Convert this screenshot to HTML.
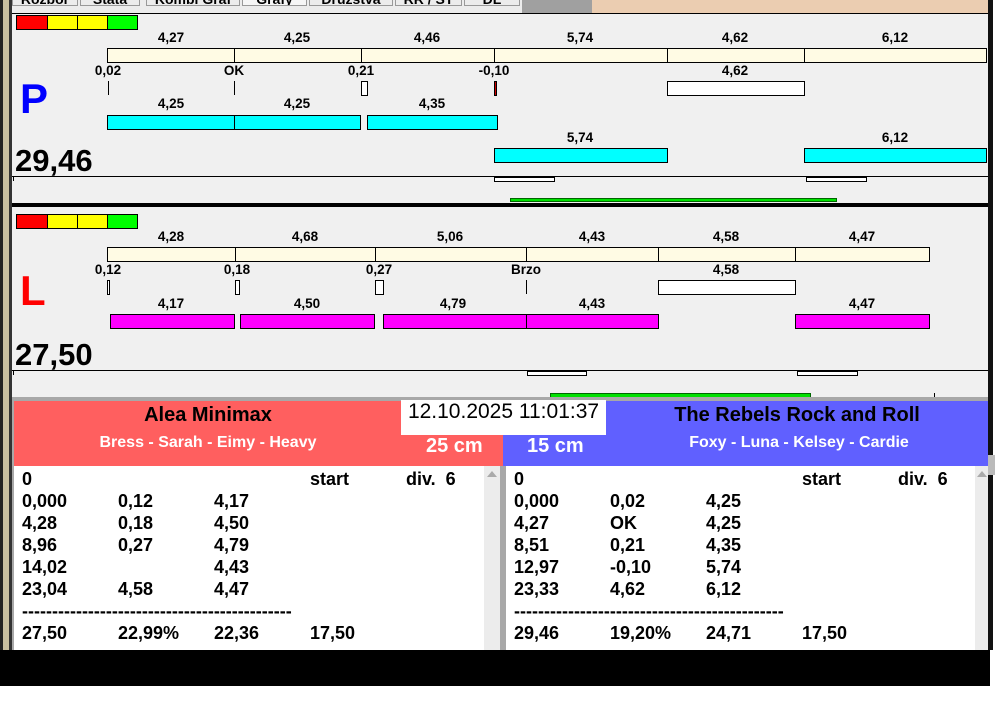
<!DOCTYPE html>
<html><head><meta charset="utf-8"><style>
*{margin:0;padding:0;box-sizing:border-box}
body{width:995px;height:716px;position:relative;background:#fff;font-family:"Liberation Sans",sans-serif;overflow:hidden}
div{position:absolute}
.t{font-weight:bold;font-size:13.5px;color:#000;transform:translateX(-50%);white-space:nowrap;line-height:14px}
.b{border:1px solid #000}
.c{background:#fffbe4}
.cy{background:#00ffff}
.mg{background:#ff00ff}
.r{font-weight:bold;font-size:18px;line-height:22px;white-space:nowrap}
.tab{top:-6px;height:12px;background:#ececec;border:1px solid #999;border-top:none;font-size:14px;font-weight:bold;line-height:10px;text-align:center;overflow:hidden;color:#000}
</style></head><body>
<div style="left:0;top:0;width:3px;height:686px;background:#222"></div>
<div style="left:3px;top:0;width:6px;height:686px;background:#c8bfa0"></div>
<div style="left:9px;top:0;width:3px;height:650px;background:#333"></div>
<div style="left:0;top:650px;width:990px;height:36px;background:#000"></div>
<div style="left:988px;top:0;width:5px;height:650px;background:#111"></div>
<div style="left:12px;top:0;width:976px;height:13px;background:#ececec"></div>
<div style="left:522px;top:0;width:70px;height:13px;background:#a0a0a0"></div>
<div style="left:592px;top:0;width:396px;height:13px;background:#ebcdb1"></div>
<div class="tab" style="left:12px;width:66px">Rozbor</div>
<div class="tab" style="left:80px;width:60px">Státa</div>
<div class="tab" style="left:146px;width:94px">Kombi Graf</div>
<div class="tab" style="left:242px;width:65px;background:#f6f6f6">Grafy</div>
<div class="tab" style="left:309px;width:84px">Družstva</div>
<div class="tab" style="left:395px;width:67px">RR / ST</div>
<div class="tab" style="left:464px;width:56px">DL</div>
<div style="left:12px;top:13px;width:976px;height:190px;background:#f0f0f0;border-top:1px solid #000"></div>
<div class="b" style="left:16px;top:15px;width:32px;height:15px;background:#f00"></div>
<div class="b" style="left:47px;top:15px;width:31px;height:15px;background:#ff0"></div>
<div class="b" style="left:77px;top:15px;width:31px;height:15px;background:#ff0"></div>
<div class="b" style="left:107px;top:15px;width:31px;height:15px;background:#0f0"></div>
<div class="t" style="left:171px;top:31px">4,27</div><div class="t" style="left:297px;top:31px">4,25</div><div class="t" style="left:427px;top:31px">4,46</div><div class="t" style="left:580px;top:31px">5,74</div><div class="t" style="left:735px;top:31px">4,62</div><div class="t" style="left:895px;top:31px">6,12</div>
<div class="b c" style="left:107px;top:48px;width:128px;height:15px"></div><div class="b c" style="left:234px;top:48px;width:128px;height:15px"></div><div class="b c" style="left:361px;top:48px;width:134px;height:15px"></div><div class="b c" style="left:494px;top:48px;width:174px;height:15px"></div><div class="b c" style="left:667px;top:48px;width:138px;height:15px"></div><div class="b c" style="left:804px;top:48px;width:183px;height:15px"></div>
<div class="t" style="left:108px;top:64px">0,02</div><div class="t" style="left:234px;top:64px">OK</div><div class="t" style="left:361px;top:64px">0,21</div><div class="t" style="left:494px;top:64px">-0,10</div><div class="t" style="left:735px;top:64px">4,62</div>
<div style="left:108px;top:81px;width:1px;height:14px;background:#000"></div>
<div style="left:234px;top:81px;width:1px;height:14px;background:#000"></div>
<div class="b" style="left:361px;top:81px;width:7px;height:15px;background:#fff"></div>
<div class="b" style="left:494px;top:81px;width:3px;height:15px;background:#c00"></div>
<div class="b" style="left:667px;top:81px;width:138px;height:15px;background:#fff"></div>
<div style="left:20px;top:76px;font-size:42px;font-weight:bold;color:#0000ff;line-height:46px">P</div>
<div class="t" style="left:171px;top:97px">4,25</div><div class="t" style="left:297px;top:97px">4,25</div><div class="t" style="left:432px;top:97px">4,35</div>
<div class="b cy" style="left:107px;top:115px;width:128px;height:15px"></div><div class="b cy" style="left:234px;top:115px;width:127px;height:15px"></div><div class="b cy" style="left:367px;top:115px;width:131px;height:15px"></div>
<div class="t" style="left:580px;top:131px">5,74</div><div class="t" style="left:895px;top:131px">6,12</div>
<div class="b cy" style="left:494px;top:148px;width:174px;height:15px"></div><div class="b cy" style="left:804px;top:148px;width:183px;height:15px"></div>
<div style="left:15px;top:144px;font-size:31px;font-weight:bold;line-height:34px">29,46</div>
<div style="left:12px;top:176px;width:976px;height:1px;background:#000"></div>
<div style="left:13px;top:176px;width:1px;height:5px;background:#000"></div>
<div class="b" style="left:494px;top:177px;width:61px;height:5px;background:#fff"></div>
<div class="b" style="left:806px;top:177px;width:61px;height:5px;background:#fff"></div>
<div style="left:510px;top:198px;width:327px;height:4px;background:#00e000;border:1px solid #060"></div>
<div style="left:12px;top:203px;width:976px;height:4px;background:#000"></div>
<div style="left:12px;top:207px;width:976px;height:190px;background:#f0f0f0"></div>
<div class="b" style="left:16px;top:214px;width:32px;height:15px;background:#f00"></div>
<div class="b" style="left:47px;top:214px;width:31px;height:15px;background:#ff0"></div>
<div class="b" style="left:77px;top:214px;width:31px;height:15px;background:#ff0"></div>
<div class="b" style="left:107px;top:214px;width:31px;height:15px;background:#0f0"></div>
<div class="t" style="left:171px;top:230px">4,28</div><div class="t" style="left:305px;top:230px">4,68</div><div class="t" style="left:450px;top:230px">5,06</div><div class="t" style="left:592px;top:230px">4,43</div><div class="t" style="left:726px;top:230px">4,58</div><div class="t" style="left:862px;top:230px">4,47</div>
<div class="b c" style="left:107px;top:247px;width:129px;height:15px"></div><div class="b c" style="left:235px;top:247px;width:141px;height:15px"></div><div class="b c" style="left:375px;top:247px;width:152px;height:15px"></div><div class="b c" style="left:526px;top:247px;width:133px;height:15px"></div><div class="b c" style="left:658px;top:247px;width:138px;height:15px"></div><div class="b c" style="left:795px;top:247px;width:135px;height:15px"></div>
<div class="t" style="left:108px;top:263px">0,12</div><div class="t" style="left:237px;top:263px">0,18</div><div class="t" style="left:379px;top:263px">0,27</div><div class="t" style="left:526px;top:263px">Brzo</div><div class="t" style="left:726px;top:263px">4,58</div>
<div class="b" style="left:107px;top:280px;width:3px;height:15px;background:#fff"></div>
<div class="b" style="left:235px;top:280px;width:5px;height:15px;background:#fff"></div>
<div class="b" style="left:375px;top:280px;width:9px;height:15px;background:#fff"></div>
<div style="left:526px;top:280px;width:1px;height:14px;background:#000"></div>
<div class="b" style="left:658px;top:280px;width:138px;height:15px;background:#fff"></div>
<div style="left:20px;top:268px;font-size:42px;font-weight:bold;color:#ff0000;line-height:46px">L</div>
<div class="t" style="left:171px;top:297px">4,17</div><div class="t" style="left:307px;top:297px">4,50</div><div class="t" style="left:453px;top:297px">4,79</div><div class="t" style="left:592px;top:297px">4,43</div><div class="t" style="left:862px;top:297px">4,47</div>
<div class="b mg" style="left:110px;top:314px;width:125px;height:15px"></div><div class="b mg" style="left:240px;top:314px;width:135px;height:15px"></div><div class="b mg" style="left:383px;top:314px;width:144px;height:15px"></div><div class="b mg" style="left:526px;top:314px;width:133px;height:15px"></div><div class="b mg" style="left:795px;top:314px;width:135px;height:15px"></div>
<div style="left:15px;top:338px;font-size:31px;font-weight:bold;line-height:34px">27,50</div>
<div style="left:12px;top:370px;width:976px;height:1px;background:#000"></div>
<div style="left:13px;top:370px;width:1px;height:5px;background:#000"></div>
<div class="b" style="left:527px;top:371px;width:60px;height:5px;background:#fff"></div>
<div class="b" style="left:797px;top:371px;width:61px;height:5px;background:#fff"></div>
<div style="left:550px;top:393px;width:261px;height:5px;background:#00e000;border:1px solid #060"></div>
<div style="left:934px;top:393px;width:1px;height:4px;background:#000"></div>
<div style="left:12px;top:397px;width:976px;height:253px;background:#a8a8a8"></div>
<div style="left:14px;top:401px;width:489px;height:65px;background:#ff5f5f"></div>
<div style="left:503px;top:401px;width:485px;height:65px;background:#6060ff"></div>
<div style="left:208px;top:404px;transform:translateX(-50%);font-size:20px;font-weight:bold;white-space:nowrap">Alea Minimax</div>
<div style="left:208px;top:434px;transform:translateX(-50%);font-size:16px;font-weight:bold;color:#fff;white-space:nowrap">Bress - Sarah - Eimy - Heavy</div>
<div style="left:797px;top:404px;transform:translateX(-50%);font-size:20px;font-weight:bold;white-space:nowrap">The Rebels Rock and Roll</div>
<div style="left:799px;top:434px;transform:translateX(-50%);font-size:16px;font-weight:bold;color:#fff;white-space:nowrap">Foxy - Luna - Kelsey - Cardie</div>
<div style="left:401px;top:400px;width:205px;height:35px;background:#fff;font-size:21px;line-height:24px;text-align:center">12.10.2025 11:01:37</div>
<div style="left:426px;top:435px;font-size:20px;font-weight:bold;color:#fff">25 cm</div>
<div style="left:527px;top:435px;font-size:20px;font-weight:bold;color:#fff">15 cm</div>
<div style="left:14px;top:466px;width:470px;height:184px;background:#fff"></div>
<div style="left:484px;top:466px;width:16px;height:184px;background:#ececec"></div>
<div style="left:487px;top:471px;width:0;height:0;border-left:5px solid transparent;border-right:5px solid transparent;border-bottom:6px solid #aaa"></div>
<div style="left:506px;top:466px;width:469px;height:184px;background:#fff"></div>
<div style="left:975px;top:466px;width:13px;height:184px;background:#ececec"></div>
<div style="left:977px;top:471px;width:0;height:0;border-left:5px solid transparent;border-right:5px solid transparent;border-bottom:6px solid #aaa"></div>
<div class="r" style="left:22px;top:468px">0<br>0,000<br>4,28<br>8,96<br>14,02<br>23,04<br>---------------------------------------------<br>27,50</div>
<div class="r" style="left:118px;top:490px">0,12<br>0,18<br>0,27<br><br>4,58<br><br>22,99%</div>
<div class="r" style="left:214px;top:490px">4,17<br>4,50<br>4,79<br>4,43<br>4,47<br><br>22,36</div>
<div class="r" style="left:310px;top:468px">start<br><br><br><br><br><br><br>17,50</div>
<div class="r" style="left:406px;top:468px">div.&nbsp; 6</div>
<div class="r" style="left:514px;top:468px">0<br>0,000<br>4,27<br>8,51<br>12,97<br>23,33<br>---------------------------------------------<br>29,46</div>
<div class="r" style="left:610px;top:490px">0,02<br>OK<br>0,21<br>-0,10<br>4,62<br><br>19,20%</div>
<div class="r" style="left:706px;top:490px">4,25<br>4,25<br>4,35<br>5,74<br>6,12<br><br>24,71</div>
<div class="r" style="left:802px;top:468px">start<br><br><br><br><br><br><br>17,50</div>
<div class="r" style="left:898px;top:468px">div.&nbsp; 6</div>
<div style="left:988px;top:455px;width:7px;height:20px;background:#bbb"></div>
</body></html>
